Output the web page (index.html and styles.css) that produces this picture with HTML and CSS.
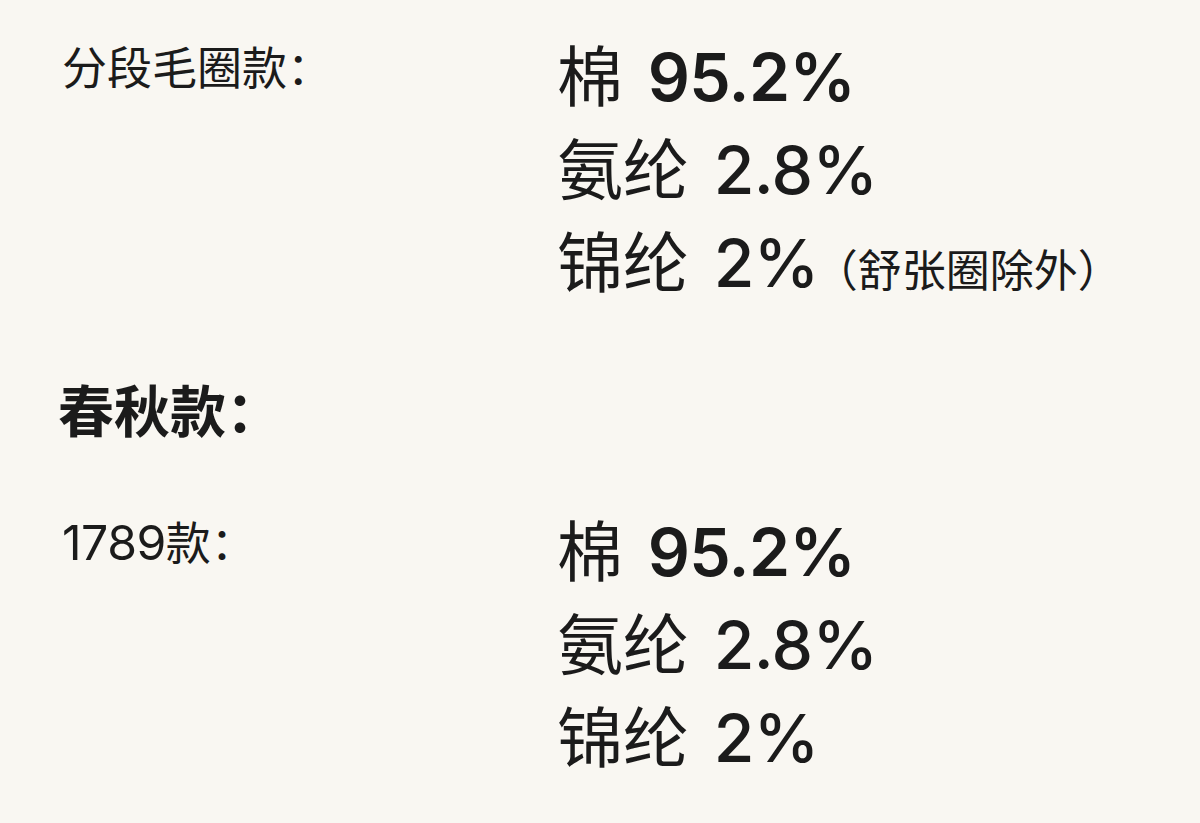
FILE: index.html
```html
<!DOCTYPE html>
<html lang="zh-CN">
<head>
<meta charset="utf-8">
<title>成分</title>
<link rel="stylesheet" href="styles.css">
</head>
<body>
<main class="page">
  <section class="spec spec-first">
    <div class="label">分段毛圈款：</div>
    <div class="values">
      <p class="line">棉 <span class="num strong">95.2%</span></p>
      <p class="line">氨纶 <span class="num">2.8%</span></p>
      <p class="line">锦纶 <span class="num">2%</span><span class="note">（舒张圈除外）</span></p>
    </div>
  </section>
  <h2 class="season">春秋款：</h2>
  <section class="spec">
    <div class="label"><span class="num">1789</span>款：</div>
    <div class="values">
      <p class="line">棉 <span class="num strong">95.2%</span></p>
      <p class="line">氨纶 <span class="num">2.8%</span></p>
      <p class="line">锦纶 <span class="num">2%</span></p>
    </div>
  </section>
</main>
</body>
</html>
```
FILE: styles.css
```css
html, body {
  margin: 0;
  padding: 0;
  background: #f9f7f2;
}
body {
  color: #1b1b1b;
  font-family: "Noto Sans CJK SC", sans-serif;
}
.page {
  width: 1200px;
  height: 823px;
  box-sizing: border-box;
  padding: 28px 0 0 62px;
  overflow: hidden;
}
.spec {
  display: grid;
  grid-template-columns: 495px 1fr;
  align-items: start;
}
.label {
  font-size: 45px;
  line-height: 64px;
  padding-top: 6px;
}
.values {
  display: flex;
  flex-direction: column;
}
.line {
  margin: 0;
  font-size: 66px;
  line-height: 88px;
  white-space: nowrap;
}
.num {
  font-family: "Inter", "Noto Sans CJK SC", sans-serif;
  font-size: 1em;
  font-weight: 500;
  letter-spacing: -0.01em;
}
.line .num {
  margin-left: 10px;
}
.num.strong {
  font-weight: 600;
}
.label .num {
  font-weight: 400;
  font-size: 1.07em;
}
.note {
  font-size: 44px;
  margin-left: -5px;
}
.season {
  margin: 56px 0 55px;
  font-size: 56px;
  line-height: 80px;
  font-weight: 700;
  margin-left: -4px;
}
```
